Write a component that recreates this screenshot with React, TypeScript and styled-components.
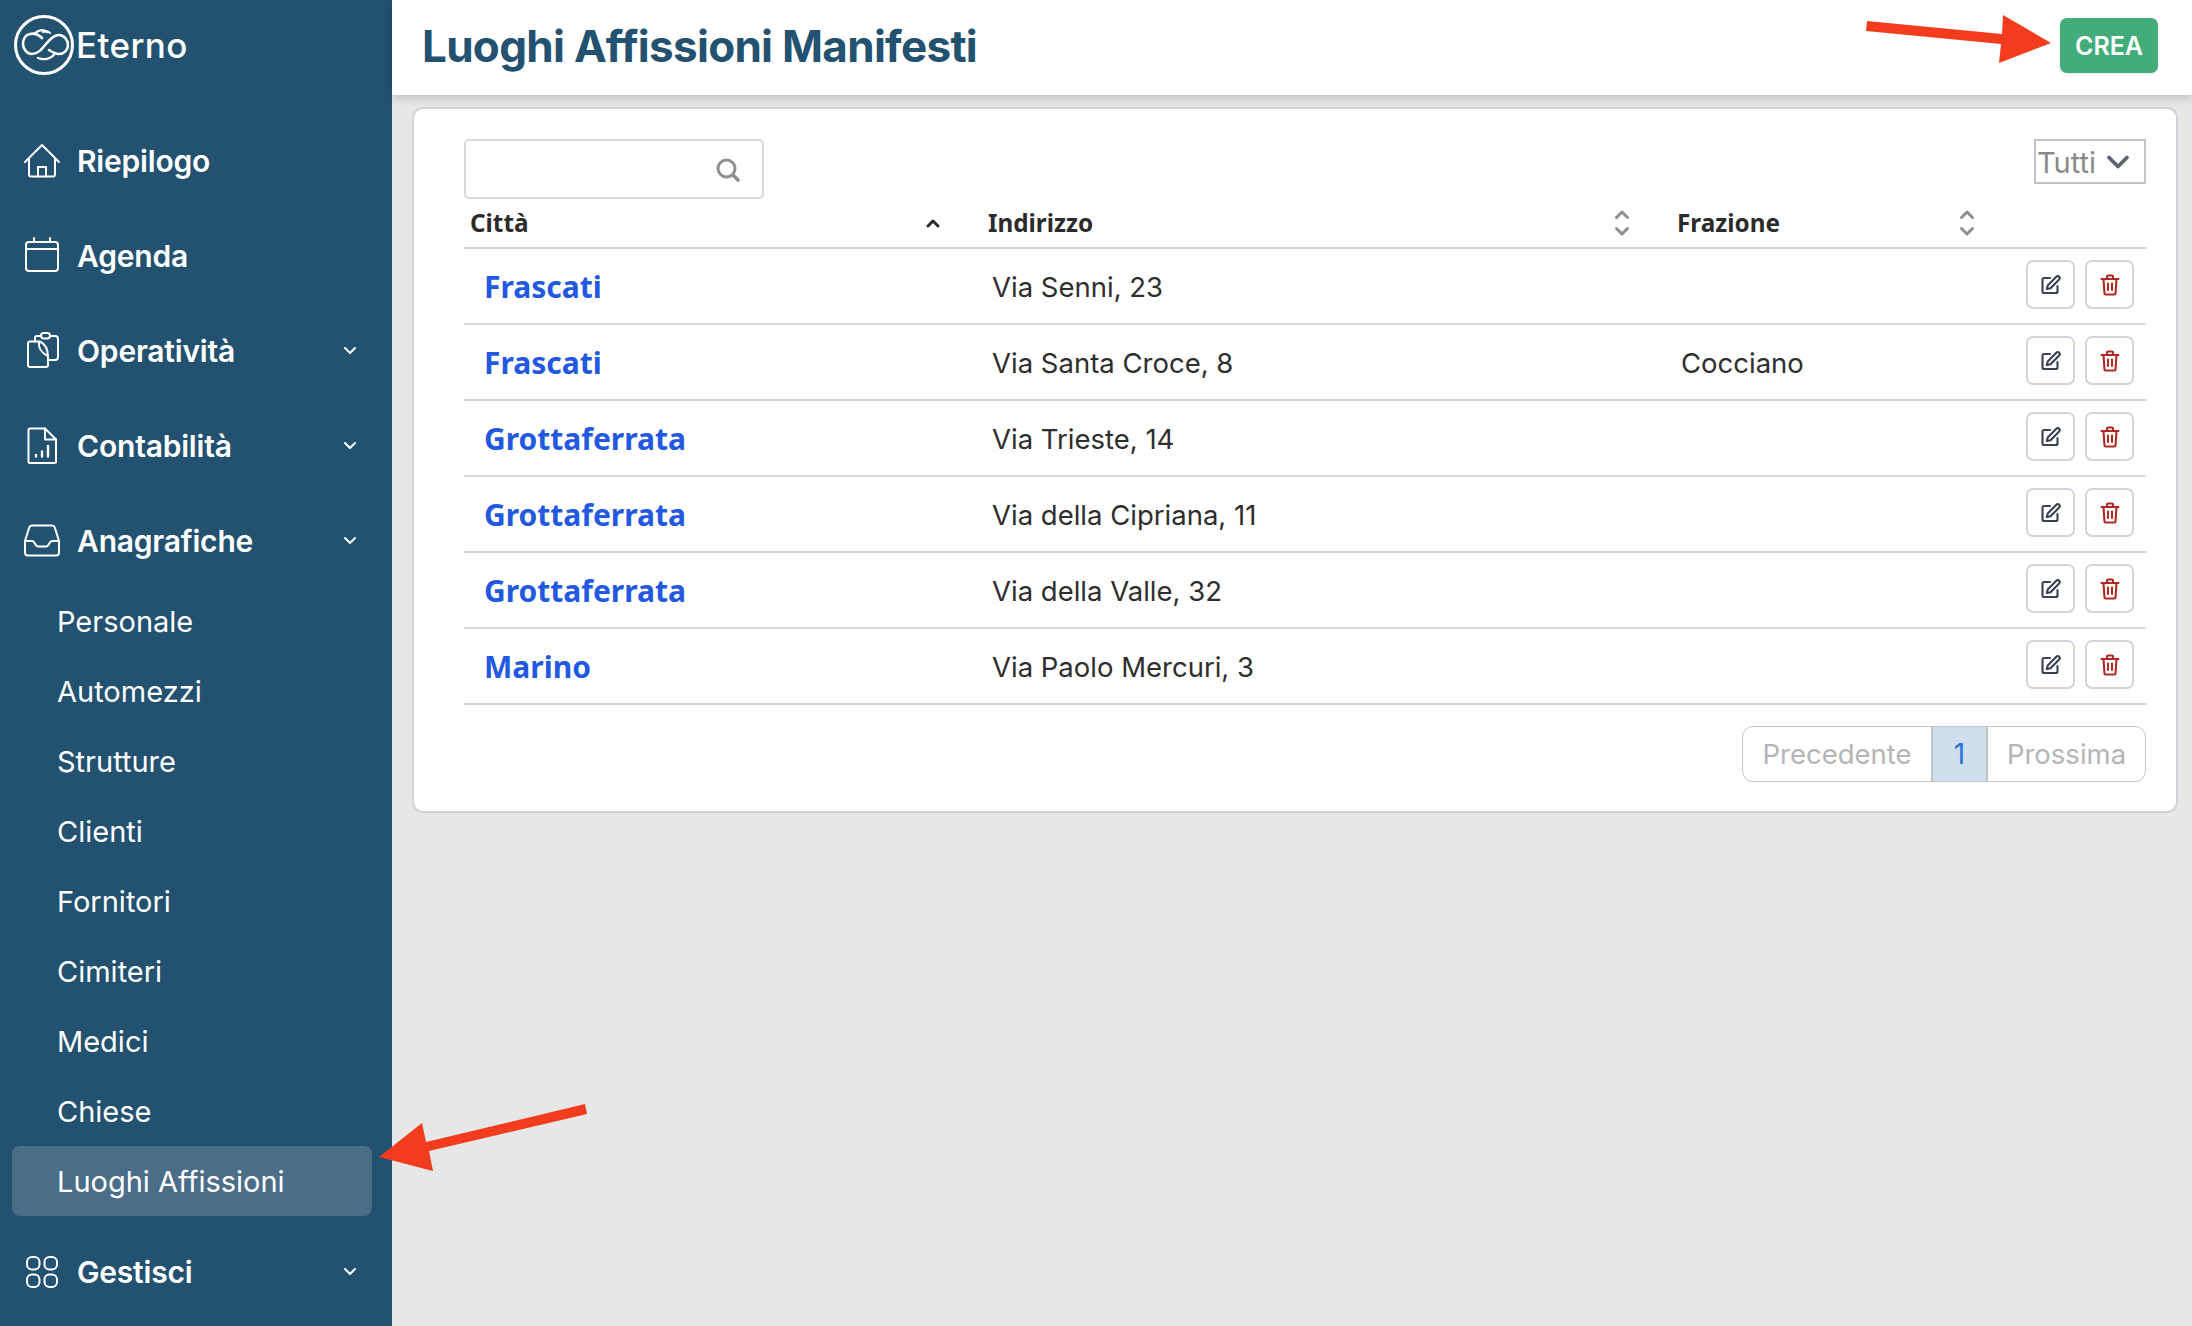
import { ReactNode } from "react";
import styled, { createGlobalStyle } from "styled-components";

const GlobalStyle = createGlobalStyle`
  * {
    box-sizing: border-box;
  }
  html, body {
    margin: 0;
    padding: 0;
    background: #e7e7e7;
    font-family: Inter, "Liberation Sans", sans-serif;
  }
`;

const Logo = () => (
  <svg width="60" height="62" viewBox="0 0 60 62" fill="none" stroke="#fff" strokeLinecap="round">
    <circle cx="30" cy="31" r="28.500" strokeWidth="3" />
    <path
      d="M28 24C24 20 20 19 16 20C11 21 9 26 9 30C9 35 13 40 18 40C24 40 28 35 32 30C36 25 40 21 45 21C50 21 54 26 54 31C54 36 50 40 45 40C41 40 38 38 35 36"
      strokeWidth="2.600"
    />
    <path d="M20 20C24 16 29 15 33 18" strokeWidth="2.400" />
    <path d="M36 19C34 17 31 17 29 18" strokeWidth="2" />
    <path d="M24 44C29 46 37 46 41 39" strokeWidth="2.400" />
  </svg>
);

const iconProps = {
  width: 38,
  height: 38,
  viewBox: "0 0 38 38",
  fill: "none",
  stroke: "#fff",
  strokeWidth: 2,
  strokeLinecap: "round" as const,
  strokeLinejoin: "round" as const,
};

const HomeIcon = () => (
  <svg {...iconProps}>
    <path d="M2 20 19 3l17 17" />
    <path d="M6 17v15.500a2 2 0 0 0 2 2h22a2 2 0 0 0 2-2V17" />
    <path d="M15 34.500V25h8v9.500" />
  </svg>
);

const CalendarIcon = () => (
  <svg {...iconProps}>
    <rect x="3" y="5" width="32" height="29" rx="3" />
    <path d="M3 12h32M11 1v4M27 1v4" />
  </svg>
);

const ClipboardIcon = () => (
  <svg {...iconProps}>
    <path d="M18 4h-4a2 2 0 0 0-2 2v3.500" />
    <path d="M27 4h5a3 3 0 0 1 3 3v18a3 3 0 0 1-3 3h-7" />
    <rect x="18" y="1" width="9" height="5.500" rx="2.700" />
    <path d="M7 9.500h10C22 12 25 18 25 25v8a2 2 0 0 1-2 2H7a2 2 0 0 1-2-2V11.500a2 2 0 0 1 2-2Z" />
    <path d="M16 10c-1 6 3 11 9 14" />
  </svg>
);

const ReportIcon = () => (
  <svg {...iconProps}>
    <path d="M7 1.500h15l11 11v22a1.500 1.500 0 0 1-1.500 1.500H7a1.500 1.500 0 0 1-1.500-1.500V3A1.500 1.500 0 0 1 7 1.500Z" />
    <path d="M22 1.500v11h11" />
    <path d="M13 28v1.500M19 24.500v5M25 19v10.500" strokeWidth="2.400" />
  </svg>
);

const InboxIcon = () => (
  <svg {...iconProps}>
    <path d="M9 3.500h20a3 3 0 0 1 2.800 2L36 19v11.500a3 3 0 0 1-3 3H5a3 3 0 0 1-3-3V19L6.200 5.500a3 3 0 0 1 2.800-2Z" />
    <path d="M2 19h7c1 0 1.700.5 2.300 1.500l1.500 2.500c.6 1 1.300 1.500 2.300 1.500h8c1 0 1.700-.5 2.300-1.500l1.500-2.500c.6-1 1.300-1.500 2.300-1.500h7" />
  </svg>
);

const GridIcon = () => (
  <svg {...iconProps}>
    <rect x="4" y="4" width="12.500" height="12.500" rx="5" />
    <rect x="21.500" y="4" width="12.500" height="12.500" rx="5" />
    <rect x="4" y="21.500" width="12.500" height="12.500" rx="5" />
    <rect x="21.500" y="21.500" width="12.500" height="12.500" rx="5" />
  </svg>
);

const Chevron = () => (
  <svg width="14" height="9" viewBox="0 0 14 9" fill="none" stroke="#fff" strokeWidth="2" strokeLinecap="round" strokeLinejoin="round">
    <path d="M2 2l5 5 5-5" />
  </svg>
);

const SearchIcon = () => (
  <svg width="26" height="26" viewBox="0 0 26 26" fill="none" stroke="#8f8f8f" strokeWidth="3" strokeLinecap="round">
    <circle cx="11.500" cy="11.500" r="8.500" />
    <path d="M18 18l5 5" strokeWidth="3.600" />
  </svg>
);

const SortIcon = ({ mode }: { mode: "asc" | "both" }) =>
  mode === "asc" ? (
    <svg width="16" height="10" viewBox="0 0 16 10" fill="none" stroke="#2b2b2b" strokeWidth="3" strokeLinecap="round" strokeLinejoin="round">
      <path d="M3 8l5-5 5 5" />
    </svg>
  ) : (
    <svg width="16" height="28" viewBox="0 0 16 28" fill="none" stroke="#8e8e8e" strokeWidth="3" strokeLinecap="round" strokeLinejoin="round">
      <path d="M2.500 8.500 8 3l5.500 5.500M2.500 19.500 8 25l5.500-5.500" />
    </svg>
  );

const EditIcon = () => (
  <svg width="20" height="20" viewBox="0 0 20 20" fill="none" stroke="#374151" strokeWidth="2.100" strokeLinecap="round" strokeLinejoin="round">
    <path d="M9 3H3a1.500 1.500 0 0 0-1.500 1.500v12A1.500 1.500 0 0 0 3 18h12a1.500 1.500 0 0 0 1.500-1.500V11" />
    <path d="M15.300 1.800a1.900 1.900 0 0 1 2.800 2.800L9.500 13.200l-3.700.9.900-3.700 8.600-8.600Z" />
  </svg>
);

const TrashIcon = () => (
  <svg width="20" height="22" viewBox="0 0 20 22" fill="none" stroke="#b02a25" strokeWidth="2.100" strokeLinecap="round" strokeLinejoin="round">
    <path d="M1.500 5h17M7 5V2.500A1 1 0 0 1 8 1.500h4a1 1 0 0 1 1 1V5" />
    <path d="M3.500 5l1 14.500a1 1 0 0 0 1 1h9a1 1 0 0 0 1-1l1-14.500" />
    <path d="M8 9.500v6.500M12 9.500v6.500" />
  </svg>
);

type NavEntry = { label: string; icon: ReactNode; chevron?: boolean };

const mainEntries: NavEntry[] = [
  { label: "Riepilogo", icon: <HomeIcon /> },
  { label: "Agenda", icon: <CalendarIcon /> },
  { label: "Operatività", icon: <ClipboardIcon />, chevron: true },
  { label: "Contabilità", icon: <ReportIcon />, chevron: true },
  { label: "Anagrafiche", icon: <InboxIcon />, chevron: true },
];

const subEntries = [
  "Personale",
  "Automezzi",
  "Strutture",
  "Clienti",
  "Fornitori",
  "Cimiteri",
  "Medici",
  "Chiese",
  "Luoghi Affissioni",
];

const rows = [
  { city: "Frascati", address: "Via Senni, 23", hamlet: "" },
  { city: "Frascati", address: "Via Santa Croce, 8", hamlet: "Cocciano" },
  { city: "Grottaferrata", address: "Via Trieste, 14", hamlet: "" },
  { city: "Grottaferrata", address: "Via della Cipriana, 11", hamlet: "" },
  { city: "Grottaferrata", address: "Via della Valle, 32", hamlet: "" },
  { city: "Marino", address: "Via Paolo Mercuri, 3", hamlet: "" },
];

const App = () => {
  return (
    <StyledPage>
      <GlobalStyle />
      <StyledSidebar>
        <StyledBrand>
          <Logo />
          <StyledBrandName>Eterno</StyledBrandName>
        </StyledBrand>
        <StyledNav>
          {mainEntries.map((entry) => (
            <StyledNavItem key={entry.label}>
              <StyledNavIcon>{entry.icon}</StyledNavIcon>
              <StyledNavLabel>{entry.label}</StyledNavLabel>
              {entry.chevron && <Chevron />}
            </StyledNavItem>
          ))}
          <StyledSubNav>
            {subEntries.map((label) => (
              <StyledSubItem key={label} $active={label === "Luoghi Affissioni"}>
                {label}
              </StyledSubItem>
            ))}
          </StyledSubNav>
          <StyledNavItem>
            <StyledNavIcon>
              <GridIcon />
            </StyledNavIcon>
            <StyledNavLabel>Gestisci</StyledNavLabel>
            <Chevron />
          </StyledNavItem>
        </StyledNav>
      </StyledSidebar>

      <StyledMain>
        <StyledHeader>
          <StyledTitle>Luoghi Affissioni Manifesti</StyledTitle>
          <StyledCreateButton>CREA</StyledCreateButton>
        </StyledHeader>

        <StyledCard>
          <StyledToolbar>
            <StyledSearch>
              <SearchIcon />
            </StyledSearch>
            <StyledPageSize>
              Tutti
              <svg width="24" height="16" viewBox="0 0 24 16" fill="none" stroke="#5b6270" strokeWidth="3.800" strokeLinecap="round" strokeLinejoin="round">
                <path d="M3 3.500l9 9 9-9" />
              </svg>
            </StyledPageSize>
          </StyledToolbar>

          <StyledTable>
            <colgroup>
              <col width="518" />
              <col width="689" />
              <col width="345" />
              <col />
            </colgroup>
            <thead>
              <tr>
                <StyledHeadCell>
                  <StyledHeadInner>
                    Città
                    <SortIcon mode="asc" />
                  </StyledHeadInner>
                </StyledHeadCell>
                <StyledHeadCell>
                  <StyledHeadInner>
                    Indirizzo
                    <SortIcon mode="both" />
                  </StyledHeadInner>
                </StyledHeadCell>
                <StyledHeadCell>
                  <StyledHeadInner>
                    Frazione
                    <SortIcon mode="both" />
                  </StyledHeadInner>
                </StyledHeadCell>
                <StyledHeadCell />
              </tr>
            </thead>
            <tbody>
              {rows.map((row) => (
                <tr key={row.address}>
                  <StyledCityCell>{row.city}</StyledCityCell>
                  <StyledCell>{row.address}</StyledCell>
                  <StyledCell>{row.hamlet}</StyledCell>
                  <StyledActionCell>
                    <StyledActions>
                      <StyledIconButton>
                        <EditIcon />
                      </StyledIconButton>
                      <StyledIconButton>
                        <TrashIcon />
                      </StyledIconButton>
                    </StyledActions>
                  </StyledActionCell>
                </tr>
              ))}
            </tbody>
          </StyledTable>

          <StyledFooter>
            <StyledPager>
              <StyledPagerItem $width={188}>Precedente</StyledPagerItem>
              <StyledPagerCurrent>1</StyledPagerCurrent>
              <StyledPagerItem $width={157}>Prossima</StyledPagerItem>
            </StyledPager>
          </StyledFooter>
        </StyledCard>
      </StyledMain>

      <StyledArrowOverlay width="2192" height="1326" viewBox="0 0 2192 1326">
        <polygon fill="#f23c1d" points="1867,21 2002,34 2003,15 2051,43 1999,63 2001,44 1866,31" />
        <polygon fill="#f23c1d" points="585,1104 426,1142 422,1123 379,1157 433,1171 429,1151 587,1114" />
      </StyledArrowOverlay>
    </StyledPage>
  );
};

export default App;

const StyledPage = styled.div`
  position: relative;
  display: flex;
  width: 2192px;
  height: 1326px;
  overflow: hidden;
  background: #e7e7e7;
`;

const StyledSidebar = styled.aside`
  width: 392px;
  flex-shrink: 0;
  background: #235170;
  color: #fff;
  display: flex;
  flex-direction: column;
`;

const StyledBrand = styled.div`
  display: flex;
  align-items: center;
  height: 90px;
  padding-left: 14px;
`;

const StyledBrandName = styled.span`
  font-size: 35px;
  font-weight: 500;
  letter-spacing: 0.4px;
  margin-left: 2px;
`;

const StyledNav = styled.nav`
  display: flex;
  flex-direction: column;
  padding: 23px 0 0;
`;

const StyledNavItem = styled.div`
  display: flex;
  align-items: center;
  height: 95px;
  padding: 0 35px 0 23px;
`;

const StyledNavIcon = styled.span`
  display: flex;
  width: 38px;
  height: 38px;
  margin-right: 16px;
`;

const StyledNavLabel = styled.span`
  flex: 1;
  font-size: 30px;
  font-weight: 600;
  letter-spacing: -0.2px;
`;

const StyledSubNav = styled.div`
  display: flex;
  flex-direction: column;
  padding: 0 20px 0 12px;
  margin-top: -2px;
  margin-bottom: 8px;
`;

const StyledSubItem = styled.div<{ $active?: boolean }>`
  display: flex;
  align-items: center;
  height: 70px;
  padding-left: 45px;
  font-size: 29px;
  font-weight: 400;
  border-radius: 8px;
  background: ${(props) => (props.$active ? "#4a6d88" : "transparent")};
`;

const StyledMain = styled.main`
  flex: 1;
  display: flex;
  flex-direction: column;
  min-width: 0;
`;

const StyledHeader = styled.header`
  height: 95px;
  flex-shrink: 0;
  display: flex;
  align-items: center;
  justify-content: space-between;
  padding: 0 34px 0 30px;
  background: #fff;
  box-shadow: 0 2px 10px rgba(0, 0, 0, 0.2);
`;

const StyledTitle = styled.h1`
  margin: -4px 0 0;
  color: #235170;
  font-size: 44px;
  font-weight: 700;
  letter-spacing: -0.7px;
`;

const StyledCreateButton = styled.button`
  width: 98px;
  height: 55px;
  margin-top: -4px;
  border: 0;
  border-radius: 7px;
  background: #42ad7b;
  color: #fff;
  font-family: inherit;
  font-size: 25px;
  font-weight: 600;
  box-shadow: 0 1px 3px rgba(0, 0, 0, 0.12);
`;

const StyledCard = styled.section`
  margin: 12px 14px 0 20px;
  height: 706px;
  padding: 30px 30px 0 50px;
  background: #fff;
  border: 2px solid #cfd3d9;
  border-radius: 11px;
`;

const StyledToolbar = styled.div`
  display: flex;
  align-items: flex-start;
  justify-content: space-between;
  height: 60px;
`;

const StyledSearch = styled.div`
  width: 300px;
  height: 60px;
  display: flex;
  align-items: center;
  justify-content: flex-end;
  padding: 2px 21px 0 0;
  border: 2px solid #d8d9dc;
  border-radius: 5px;
`;

const StyledPageSize = styled.div`
  width: 112px;
  height: 45px;
  display: flex;
  align-items: center;
  justify-content: space-between;
  padding: 1px 14px 0 1px;
  border: 2px solid #c2c2c2;
  color: #8a8a8a;
  font-size: 29px;
`;

const StyledTable = styled.table`
  width: 100%;
  table-layout: fixed;
  border-collapse: collapse;
`;

const StyledHeadCell = styled.th`
  height: 49px;
  padding: 0 6px;
  border-bottom: 2px solid #d6d6d8;
  color: #2b2b2b;
  font-family: "Noto Sans", sans-serif;
  font-size: 24.300px;
  font-weight: 700;
  text-align: left;
`;

const StyledHeadInner = styled.div`
  display: flex;
  align-items: center;
  justify-content: space-between;
  padding-right: 35px;
  margin-top: -1px;
`;

const StyledCityCell = styled.td`
  height: 76px;
  padding: 0 20px;
  border-bottom: 2px solid #d6d6d8;
  color: #2259e0;
  font-family: "Noto Sans", sans-serif;
  font-size: 30px;
  font-weight: 700;
`;

const StyledCell = styled.td`
  height: 76px;
  padding: 2px 10px 0;
  border-bottom: 2px solid #d6d6d8;
  color: #2e2e2e;
  font-size: 27.500px;
`;

const StyledActionCell = styled.td`
  height: 76px;
  padding: 0;
  border-bottom: 2px solid #d6d6d8;
`;

const StyledActions = styled.div`
  display: flex;
  justify-content: flex-end;
  gap: 10px;
  padding: 0 12px 3px 0;
`;

const StyledIconButton = styled.button`
  width: 49px;
  height: 49px;
  padding: 0;
  display: flex;
  align-items: center;
  justify-content: center;
  background: #fff;
  border: 2px solid #d1d5db;
  border-radius: 7px;
`;

const StyledFooter = styled.div`
  display: flex;
  justify-content: flex-end;
  margin-top: 21px;
`;

const StyledPager = styled.div`
  display: flex;
  height: 56px;
  border: 1.500px solid #c6c6c6;
  border-radius: 11px;
  overflow: hidden;
`;

const StyledPagerItem = styled.div<{ $width: number }>`
  width: ${(props) => props.$width}px;
  display: flex;
  align-items: center;
  justify-content: center;
  color: #b5b5b5;
  font-size: 27.500px;
`;

const StyledPagerCurrent = styled.div`
  width: 57px;
  display: flex;
  align-items: center;
  justify-content: center;
  background: #d0dfee;
  border-left: 2px solid #c2c2c2;
  border-right: 2px solid #c2c2c2;
  color: #2c72d8;
  font-size: 28px;
`;

const StyledArrowOverlay = styled.svg`
  position: absolute;
  inset: 0;
  pointer-events: none;
`;
